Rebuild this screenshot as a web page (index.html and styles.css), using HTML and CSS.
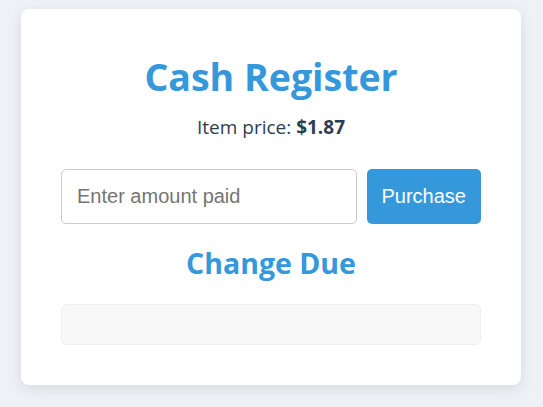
FILE: index.html
```html
<!DOCTYPE html>
<html lang="en">
<head>
<meta charset="utf-8">
<title>Cash Register</title>
<link rel="stylesheet" href="styles.css">
</head>
<body>
<main class="card">
  <h1 class="title">Cash Register</h1>
  <p class="price">Item price: <strong>$1.87</strong></p>
  <div class="form-row">
    <input class="cash-input" type="number" placeholder="Enter amount paid">
    <button class="buy-btn" type="button">Purchase</button>
  </div>
  <h2 class="subtitle">Change Due</h2>
  <div class="change-box"></div>
</main>
</body>
</html>
```
FILE: styles.css
```css
* { box-sizing: border-box; }
html, body { height: 100%; }
body {
  margin: 0;
  padding: 9px 1px 0 0;
  background: #eef2f7;
  font-family: "Open Sans", "Noto Sans", sans-serif;
  color: #2c3e50;
}
.card {
  width: 500px;
  margin: 0 auto;
  background: #ffffff;
  border-radius: 8px;
  box-shadow: 0 4px 14px rgba(0, 0, 0, 0.1);
  padding: 40px;
  text-align: center;
}
.title {
  margin: 4px 0 0;
  font-size: 37.5px;
  line-height: 48px;
  font-weight: 700;
  color: #3498db;
}
.price {
  margin: 13px 0 0;
  font-size: 19px;
  line-height: 26px;
}
.price strong { font-weight: 700; }
.form-row {
  display: flex;
  gap: 10px;
  margin-top: 29px;
}
.cash-input {
  flex: 1;
  min-width: 0;
  height: 55px;
  padding: 0 15px;
  border: 1px solid #cccccc;
  border-radius: 5px;
  font-family: "Liberation Sans", Arial, sans-serif;
  font-size: 20px;
  color: #333;
  outline: none;
}
.cash-input::placeholder { color: #757575; }
.buy-btn {
  height: 55px;
  padding: 0 15px;
  border: none;
  border-radius: 5px;
  background: #3498db;
  color: #ffffff;
  font-family: "Liberation Sans", Arial, sans-serif;
  font-size: 20px;
  cursor: pointer;
}
.subtitle {
  margin: 21px 0 0;
  font-size: 28.5px;
  line-height: 36px;
  font-weight: 700;
  color: #3498db;
}
.change-box {
  margin-top: 23px;
  height: 41px;
  background: #f8f8f8;
  border: 1px solid #eeeeee;
  border-radius: 6px;
}
```
